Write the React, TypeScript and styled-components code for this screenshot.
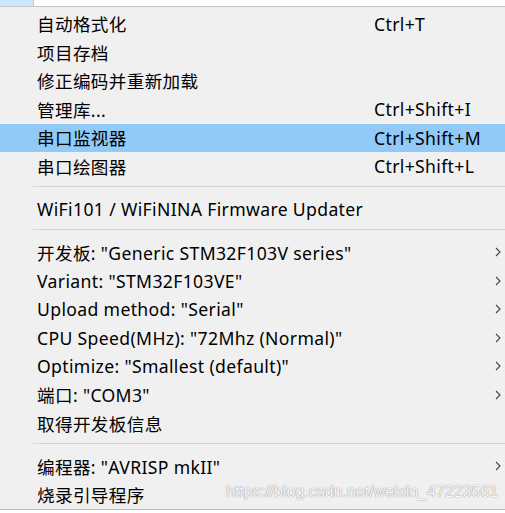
import React from "react";
import styled, { createGlobalStyle } from "styled-components";

const Global = createGlobalStyle`
  html, body { margin: 0; padding: 0; background: #f0f0f0; }
  body { font-family: "Noto Sans", "Noto Sans CJK SC", sans-serif; overflow: hidden; }
`;

const Page = styled.div`
  width: 505px;
  height: 513px;
  position: relative;
  overflow: hidden;
  background: #f0f0f0;
  display: flex;
  flex-direction: column;
`;

const TopBar = styled.div`
  height: 6px;
  background: #ffffff;
  border-bottom: 1px solid #c4c4c4;
  display: flex;
`;

const Tab = styled.div`
  width: 33px;
  background: #cce8ff;
  border-right: 1px solid #99d1ff;
`;

const Menu = styled.div`
  flex: 1;
  padding-top: 3px;
  display: flex;
  flex-direction: column;
  background: #f0f0f0;
`;

const Row = styled.div<{ $active?: boolean }>`
  height: 28.5px;
  display: flex;
  align-items: center;
  padding-left: 37px;
  font-size: 17.6px;
  letter-spacing: 0.35px;
  color: #000;
  white-space: nowrap;
  background: ${(p) => (p.$active ? "#91c9f7" : "transparent")};
`;

const Label = styled.span`
  flex: 1;
`;

const Shortcut = styled.span`
  width: 121px;
`;

const Arrow = styled.span`
  width: 10px;
  display: flex;
  align-items: center;
`;

const Separator = styled.div`
  height: 14.5px;
  padding-top: 5px;
  box-sizing: border-box;
  margin-left: 33px;
  &::before {
    content: "";
    display: block;
    height: 1px;
    background: #d5d5d5;
  }
`;

const Footer = styled.div`
  height: 3px;
  background: #fff;
  border-top: 1px solid #b9b9b9;
`;

const Watermark = styled.div`
  position: absolute;
  left: 226px;
  top: 483px;
  font-family: "Liberation Sans", sans-serif;
  font-size: 16px;
  white-space: nowrap;
  color: rgba(255, 255, 255, 0.95);
  text-shadow: 0 0 1px rgba(120, 120, 120, 0.8), 0 0 1px rgba(120, 120, 120, 0.5);
  pointer-events: none;
`;

const Chevron = () => (
  <svg width="6" height="10" viewBox="0 0 6 10">
    <path d="M1 1 L5 5 L1 9" fill="none" stroke="#444" strokeWidth="1.1" />
  </svg>
);

type Item =
  | { sep: true }
  | { sep?: false; label: string; shortcut?: string; sub?: boolean; active?: boolean };

const items: Item[] = [
  { label: "自动格式化", shortcut: "Ctrl+T" },
  { label: "项目存档" },
  { label: "修正编码并重新加载" },
  { label: "管理库...", shortcut: "Ctrl+Shift+I" },
  { label: "串口监视器", shortcut: "Ctrl+Shift+M", active: true },
  { label: "串口绘图器", shortcut: "Ctrl+Shift+L" },
  { sep: true },
  { label: "WiFi101 / WiFiNINA Firmware Updater" },
  { sep: true },
  { label: '开发板: "Generic STM32F103V series"', sub: true },
  { label: 'Variant: "STM32F103VE"', sub: true },
  { label: 'Upload method: "Serial"', sub: true },
  { label: 'CPU Speed(MHz): "72Mhz (Normal)"', sub: true },
  { label: 'Optimize: "Smallest (default)"', sub: true },
  { label: '端口: "COM3"', sub: true },
  { label: "取得开发板信息" },
  { sep: true },
  { label: '编程器: "AVRISP mkII"', sub: true },
  { label: "烧录引导程序" },
];

export default function App() {
  return (
    <Page>
      <Global />
      <TopBar>
        <Tab />
      </TopBar>
      <Menu>
        {items.map((it, i) =>
          it.sep ? (
            <Separator key={i} />
          ) : (
            <Row key={i} $active={it.active}>
              <Label>{it.label}</Label>
              <Shortcut>{it.shortcut ?? ""}</Shortcut>
              <Arrow>{it.sub ? <Chevron /> : null}</Arrow>
            </Row>
          )
        )}
      </Menu>
      <Footer />
      <Watermark>https://blog.csdn.net/weixin_47223561</Watermark>
    </Page>
  );
}
